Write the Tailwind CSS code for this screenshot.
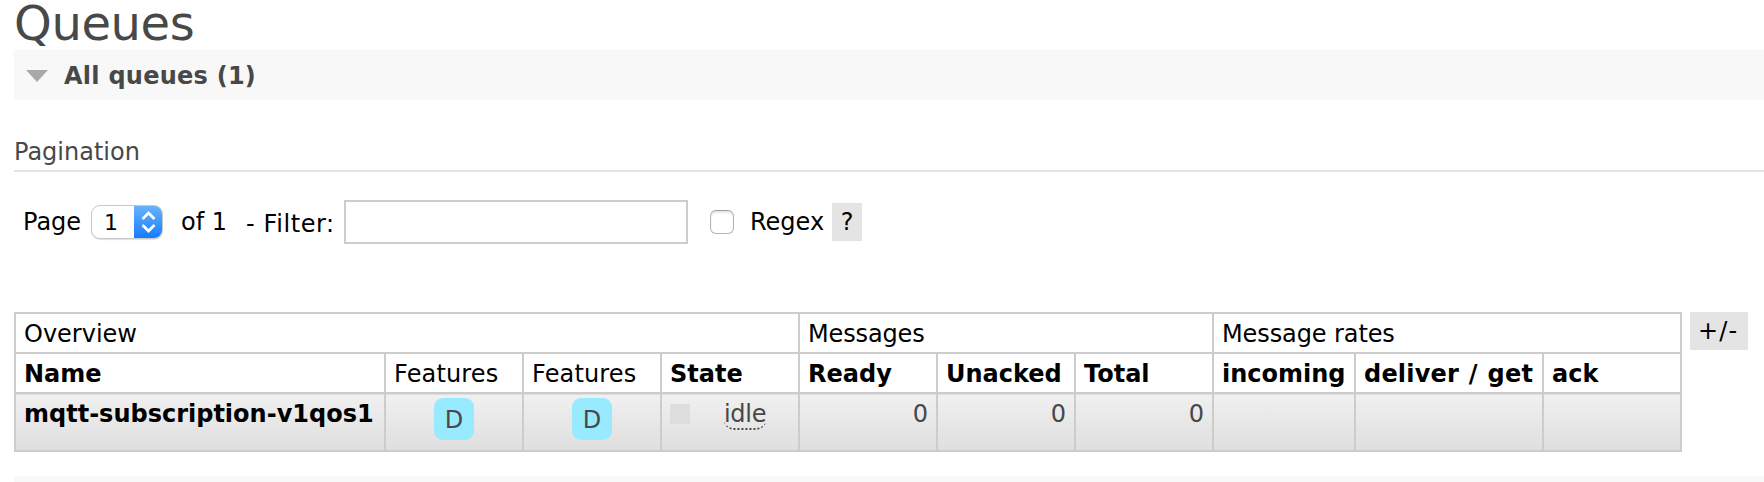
<!DOCTYPE html>
<html lang="en">
<head>
<meta charset="utf-8">
<title>Queues</title>
<script src="https://cdn.jsdelivr.net/npm/@tailwindcss/browser@4"></script>
</head>
<body class="h-[482px] overflow-hidden bg-white pl-[14px] font-['Verdana','DejaVu_Sans',sans-serif] text-[24px] leading-[40px] whitespace-nowrap text-black">
<h1 class="h-[50px] text-[48px] leading-[46px] tracking-[-0.4px] text-[#484848]">Queues</h1>
<h2 class="flex h-[50px] items-center bg-[#f8f8f8] pl-3 font-bold text-[#484848]">
  <svg class="mt-px mr-4 h-3 w-[22px]" viewBox="0 0 22 12"><path d="M0 0H22L11 12Z" fill="#a9a9a9"/></svg>
  <span class="pt-0.5 tracking-[0.25px]">All queues (1)</span>
</h2>
<h3 class="mt-8 h-10 border-b-2 border-[#e4e4e4] text-[#484848]">Pagination</h3>
<div class="mt-7 flex h-[44px] items-center">
  <span class="ml-[9px] w-[68px]">Page</span>
  <div class="flex h-[34px] w-[72px] overflow-hidden rounded-[9px] border border-[#c8c8c8] bg-white shadow-[0_1px_1px_rgba(0,0,0,0.12)]">
    <span class="w-[42px] pl-[12px] text-[22px] leading-[33px]">1</span>
    <svg class="-my-px -mr-px h-[34px] w-[29px] shrink-0" viewBox="0 0 29 34">
      <defs><linearGradient id="blue" x2="0" y2="1"><stop stop-color="#6bb3fa"/><stop offset="1" stop-color="#147bfd"/></linearGradient></defs>
      <path d="M0 0H29V34H0Z" fill="url(#blue)"/>
      <path d="M8.5 14L14.5 8L20.5 14M8.5 20L14.5 26L20.5 20" fill="none" stroke="#fff" stroke-width="2.7"/>
    </svg>
  </div>
  <span class="ml-[18px] w-[65px]">of 1</span>
  <span class="mt-[3px] w-[98px] tracking-[0.6px]">- Filter:</span>
  <input aria-label="Filter" class="h-[44px] w-[344px] border-2 border-[#ccc]">
  <input type="checkbox" aria-label="Regex" class="ml-[22px] size-6 appearance-none rounded-[6px] border border-[#b5b5b5] border-t-[#a0a0a0] bg-white shadow-[inset_0_2px_2px_rgba(0,0,0,0.1)]">
  <span class="ml-4 w-[82px]">Regex</span>
  <span class="h-[38px] w-[30px] bg-[#e4e4e4] text-center leading-[38px]">?</span>
</div>
<div class="mt-[68px] flex items-start gap-2">
  <div class="grid grid-cols-[368px_repeat(6,136px)_140px_186px_136px] grid-rows-[38px_38px_56px] gap-0.5 bg-[#ccc] p-0.5 *:px-2">
    <div class="col-span-4 bg-white">Overview</div>
    <div class="col-span-3 bg-white tracking-[-0.15px]">Messages</div>
    <div class="col-span-3 bg-white tracking-[-0.1px]">Message rates</div>
    <b class="bg-white">Name</b>
    <div class="bg-white tracking-[0.15px]">Features</div>
    <div class="bg-white tracking-[0.15px]">Features</div>
    <b class="bg-white">State</b>
    <b class="bg-white">Ready</b>
    <b class="bg-white">Unacked</b>
    <b class="bg-white">Total</b>
    <b class="bg-white">incoming</b>
    <b class="bg-white tracking-[0.2px] [word-spacing:1.2px]">deliver / get</b>
    <b class="bg-white">ack</b>
    <b class="border-t border-[#dfdfdf] bg-linear-to-b from-[#f0f0f0] to-[#dfdfdf] leading-[38px]">mqtt-subscription-v1qos1</b>
    <div class="flex justify-center border-t border-[#dfdfdf] bg-linear-to-b from-[#f0f0f0] to-[#dfdfdf] pt-[3px] text-[#484848]"><span class="h-[42px] w-10 rounded-[9px] bg-[#98ebff] text-center leading-[44px]">D</span></div>
    <div class="flex justify-center border-t border-[#dfdfdf] bg-linear-to-b from-[#f0f0f0] to-[#dfdfdf] pt-[3px] text-[#484848]"><span class="h-[42px] w-10 rounded-[9px] bg-[#98ebff] text-center leading-[44px]">D</span></div>
    <div class="flex items-start border-t border-[#dfdfdf] bg-linear-to-b from-[#f0f0f0] to-[#dfdfdf] text-[#484848]">
      <i class="mt-[9px] mr-[34px] size-5 bg-[#ddd]"></i>
      <span class="mt-[4px] h-[31px] w-[42px] rounded-[10px] border-b-2 border-dotted border-[#484848] leading-[30px] tracking-[-0.3px]">idle</span>
    </div>
    <div class="border-t border-[#dfdfdf] bg-linear-to-b from-[#f0f0f0] to-[#dfdfdf] text-right leading-[38px] text-[#484848]">0</div>
    <div class="border-t border-[#dfdfdf] bg-linear-to-b from-[#f0f0f0] to-[#dfdfdf] text-right leading-[38px] text-[#484848]">0</div>
    <div class="border-t border-[#dfdfdf] bg-linear-to-b from-[#f0f0f0] to-[#dfdfdf] text-right leading-[38px] text-[#484848]">0</div>
    <div class="border-t border-[#dfdfdf] bg-linear-to-b from-[#f0f0f0] to-[#dfdfdf]"></div>
    <div class="border-t border-[#dfdfdf] bg-linear-to-b from-[#f0f0f0] to-[#dfdfdf]"></div>
    <div class="border-t border-[#dfdfdf] bg-linear-to-b from-[#f0f0f0] to-[#dfdfdf]"></div>
  </div>
  <span class="h-[38px] w-[58px] bg-[#e4e4e4] pl-2 leading-[38px] tracking-[1.2px]">+/-</span>
</div>
<div class="mt-6 h-[6px] bg-[#f8f8f8]"></div>
</body>
</html>
